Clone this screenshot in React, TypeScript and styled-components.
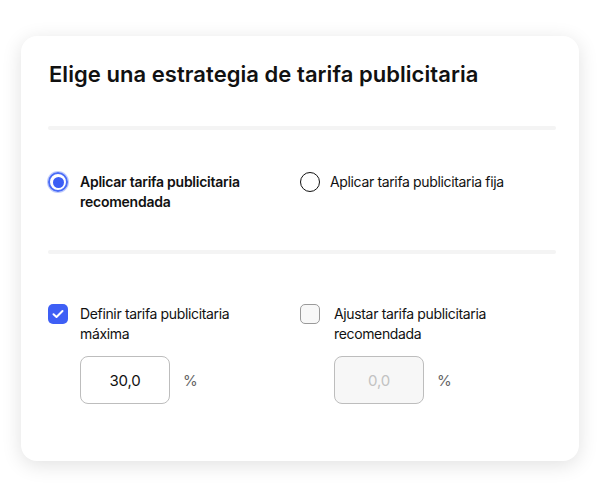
import React, { FunctionComponent } from 'react'
import styled, { createGlobalStyle } from 'styled-components'

const GlobalStyle = createGlobalStyle`
    html, body {
        margin: 0;
        padding: 0;
        background: #ffffff;
    }
    body {
        font-family: Inter, "Noto Sans", "Liberation Sans", sans-serif;
        color: #111111;
        -webkit-font-smoothing: antialiased;
    }
`

const Page = styled.div`
    width: 600px;
    height: 497px;
    padding: 36px 21px 0 21px;
    box-sizing: border-box;
`

const Card = styled.div`
    width: 558px;
    height: 425px;
    background: #ffffff;
    border-radius: 16px;
    box-shadow: 0 4px 20px rgba(0, 0, 0, 0.12);
    padding: 22px 23px 0 27px;
    box-sizing: border-box;
`

const Title = styled.h1`
    margin: 0 0 0 1px;
    font-size: 22px;
    line-height: 32px;
    font-weight: 600;
    letter-spacing: 0.05px;
    color: #111111;
`

const Divider = styled.div<{ top: number }>`
    height: 4px;
    border-radius: 2px;
    background: #f4f4f4;
    margin-top: ${props => props.top}px;
`

const Columns = styled.div<{ top: number }>`
    display: grid;
    grid-template-columns: 252px 1fr;
    margin-top: ${props => props.top}px;
`

const Option = styled.label<{ gap?: number }>`
    display: flex;
    align-items: flex-start;
    gap: ${props => props.gap ?? 12}px;
    cursor: pointer;
`

const OptionText = styled.span<{ bold?: boolean }>`
    font-size: 14px;
    line-height: 20px;
    font-weight: ${props => props.bold ? 600 : 400};
    letter-spacing: ${props => props.bold ? '-0.25px' : '-0.35px'};
    color: #111111;
    width: 190px;
`

const RadioCircle = styled.span<{ checked?: boolean }>`
    flex: none;
    width: 20px;
    height: 20px;
    border-radius: 50%;
    box-sizing: border-box;
    display: flex;
    align-items: center;
    justify-content: center;
    border: ${props => props.checked ? '2px solid #4a6cf7' : '1.5px solid #111111'};
    box-shadow: ${props => props.checked ? '0 0 0 1px rgba(74, 108, 247, 0.35)' : 'none'};
    &::after {
        content: '';
        display: ${props => props.checked ? 'block' : 'none'};
        width: 11px;
        height: 11px;
        border-radius: 50%;
        background: #3c5ef5;
    }
`

const Box = styled.span<{ checked?: boolean }>`
    flex: none;
    width: 20px;
    height: 20px;
    border-radius: 5px;
    box-sizing: border-box;
    display: flex;
    align-items: center;
    justify-content: center;
    background: ${props => props.checked ? '#3e5ff5' : '#f8f8f8'};
    border: ${props => props.checked ? 'none' : '1px solid #9a9a9a'};
`

const Field = styled.div<{ indent: number }>`
    display: flex;
    align-items: center;
    gap: 13px;
    margin: 12px 0 0 ${props => props.indent}px;
`

const NumberBox = styled.div<{ disabled?: boolean }>`
    width: 90px;
    height: 48px;
    box-sizing: border-box;
    border-radius: 8px;
    border: 1px solid #bdbdbd;
    background: ${props => props.disabled ? '#f7f7f7' : '#ffffff'};
    display: flex;
    align-items: center;
    justify-content: center;
    font-size: 15px;
    letter-spacing: -0.2px;
    color: ${props => props.disabled ? '#c2c2c2' : '#111111'};
`

const Unit = styled.span`
    font-size: 15px;
    color: #666666;
`

const Check = () => (
    <svg width="12" height="10" viewBox="0 0 12 10">
        <path d="M1.5 5.2 L4.5 8 L10.5 2" fill="none" stroke="#ffffff" strokeWidth="2" strokeLinecap="round" strokeLinejoin="round" />
    </svg>
)

interface AmountProps {
    value: string
    indent: number
    disabled?: boolean
}

const Amount: FunctionComponent<AmountProps> = ({ value, indent, disabled }) => (
    <Field indent={indent}>
        <NumberBox disabled={disabled}>{value}</NumberBox>
        <Unit>%</Unit>
    </Field>
)

const App: FunctionComponent = () => {
    return (
        <Page>
            <GlobalStyle />
            <Card>
                <Title>Elige una estrategia de tarifa publicitaria</Title>
                <Divider top={36} />
                <Columns top={42}>
                    <Option>
                        <RadioCircle checked />
                        <OptionText bold>Aplicar tarifa publicitaria recomendada</OptionText>
                    </Option>
                    <Option gap={10}>
                        <RadioCircle />
                        <OptionText>Aplicar tarifa publicitaria fija</OptionText>
                    </Option>
                </Columns>
                <Divider top={38} />
                <Columns top={50}>
                    <div>
                        <Option>
                            <Box checked><Check /></Box>
                            <OptionText>Definir tarifa publicitaria máxima</OptionText>
                        </Option>
                        <Amount value="30,0" indent={32} />
                    </div>
                    <div>
                        <Option gap={14}>
                            <Box />
                            <OptionText>Ajustar tarifa publicitaria recomendada</OptionText>
                        </Option>
                        <Amount value="0,0" indent={34} disabled />
                    </div>
                </Columns>
            </Card>
        </Page>
    )
}

export default App
